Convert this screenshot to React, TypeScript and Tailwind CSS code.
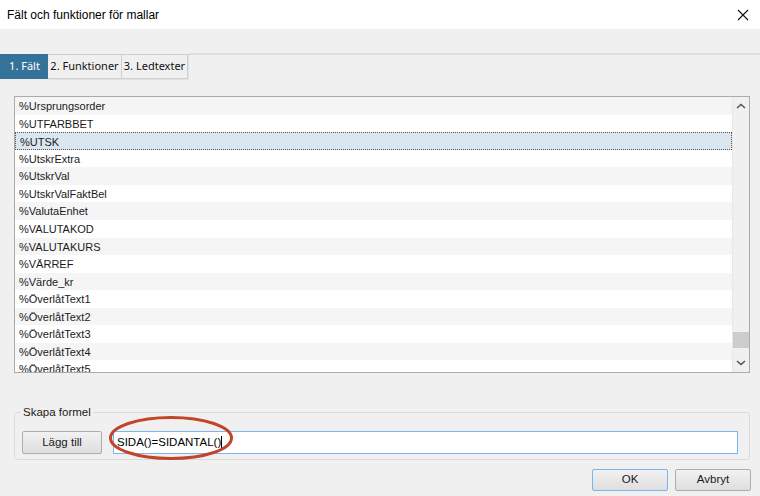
import React from "react";

const items = [
  "%Ursprungsorder",
  "%UTFARBBET",
  "%UTSK",
  "%UtskrExtra",
  "%UtskrVal",
  "%UtskrValFaktBel",
  "%ValutaEnhet",
  "%VALUTAKOD",
  "%VALUTAKURS",
  "%VÄRREF",
  "%Värde_kr",
  "%ÖverlåtText1",
  "%ÖverlåtText2",
  "%ÖverlåtText3",
  "%ÖverlåtText4",
  "%ÖverlåtText5",
];

export default function App() {
  return (
    <div className="w-[760px] h-[496px] bg-[#f0f0f0] flex flex-col relative overflow-hidden" style={{ fontFamily: '"Liberation Sans", Arial, sans-serif' }}>
      {/* Title bar */}
      <div className="h-[29px] bg-white flex items-center justify-between pl-[7px] pr-[9px] shrink-0">
        <span className="text-[12px] text-black">Fält och funktioner för mallar</span>
        <svg width="12" height="12" viewBox="0 0 12 12" className="mr-[2px]">
          <path d="M1 1 L11 11 M11 1 L1 11" stroke="#111" strokeWidth="1.1" fill="none" />
        </svg>
      </div>
      <div className="h-[25px] shrink-0" />
      {/* Tabs */}
      <div className="h-[25px] flex shrink-0" style={{ fontFamily: '"Noto Sans", sans-serif' }}>
        <div className="w-[48px] h-[25px] bg-[#35729a] text-white text-[11px] flex items-center justify-center pl-[1px]">1. Fält</div>
        <div className="w-[74px] h-[25px] bg-[#f0f0f0] border border-[#cfcfcf] border-l-0 shadow-[1px_1px_0_#e2e2e2] text-[11px] text-[#111] flex items-center justify-center">2. Funktioner</div>
        <div className="w-[66px] h-[25px] bg-[#f0f0f0] border border-[#cfcfcf] border-l-0 shadow-[1px_1px_0_#e2e2e2] text-[11px] text-[#111] flex items-center justify-center">3. Ledtexter</div>
        <div className="flex-1 border-t-2 border-[#dedede] -mt-[1px]" />
      </div>
      <div className="h-[17px] shrink-0" />
      {/* List */}
      <div className="ml-[14px] w-[736px] h-[277px] border border-[#ababab] bg-white flex shrink-0">
        <div className="flex-1 overflow-hidden">
          {items.map((t, i) => (
            <div
              key={t}
              className={
                "h-[17.57px] pl-[4px] pt-[1px] text-[11px] leading-[17px] text-[#1a1a1a] whitespace-nowrap " +
                (i === 2
                  ? "bg-[#dae6f0] border border-dotted border-[#555] pl-[3px] pt-0"
                  : i % 2 === 0
                  ? "bg-[#f5f5f5]"
                  : "bg-white")
              }
            >
              {t}
            </div>
          ))}
        </div>
        <div className="w-[17px] bg-[#f0f0f0] border-l border-[#e8e8e8] flex flex-col items-center">
          <svg width="10" height="6" viewBox="0 0 10 6" className="mt-[6px]">
            <path d="M1 5 L5 1.5 L9 5" stroke="#555" strokeWidth="1.6" fill="none" />
          </svg>
          <div className="flex-1" />
          <div className="w-[16px] h-[16px] bg-[#cdcdcd] mb-[12px]" />
          <svg width="10" height="6" viewBox="0 0 10 6" className="mb-[6px]">
            <path d="M1 1 L5 4.5 L9 1" stroke="#555" strokeWidth="1.6" fill="none" />
          </svg>
        </div>
      </div>
      <div className="h-[32px] shrink-0" />
      {/* Group box */}
      <fieldset className="ml-[14px] w-[736px] h-[56px] border border-[#dcdcdc] rounded-[3px] px-[7px] shrink-0 -mt-[1px]">
        <legend className="-ml-[1px] px-[2px] text-[11.5px] text-[#1a1a1a]">Skapa formel</legend>
        <div className="flex items-center mt-[10px]">
          <button className="w-[80px] h-[23px] border border-[#adadad] rounded-[2px] bg-gradient-to-b from-[#f2f2f2] to-[#dedede] text-[11.5px] text-[#1a1a1a]">Lägg till</button>
          <div className="ml-[11px] w-[625px] h-[23px] bg-white border border-[#7eb4ea] flex items-center pl-[3px] text-[11.5px] text-black">
            SIDA()=SIDANTAL()<span className="w-px h-[14px] bg-black" />
          </div>
        </div>
      </fieldset>
      {/* Buttons */}
      <div className="flex justify-end gap-[7px] pr-[9px] mt-[9px]">
        <button className="w-[76px] h-[22px] border border-[#7eb4ea] rounded-[2px] bg-gradient-to-b from-[#f2f2f2] to-[#dedede] text-[11.5px] text-[#1a1a1a]">OK</button>
        <button className="w-[76px] h-[22px] border border-[#adadad] rounded-[2px] bg-gradient-to-b from-[#f2f2f2] to-[#dedede] text-[11.5px] text-[#1a1a1a]">Avbryt</button>
      </div>
      {/* Red annotation ellipse */}
      <svg className="absolute left-[108px] top-[415px]" width="126" height="46" viewBox="0 0 126 46">
        <ellipse cx="63" cy="23" rx="60.5" ry="20.5" fill="none" stroke="#c0452b" strokeWidth="3" />
      </svg>
    </div>
  );
}
